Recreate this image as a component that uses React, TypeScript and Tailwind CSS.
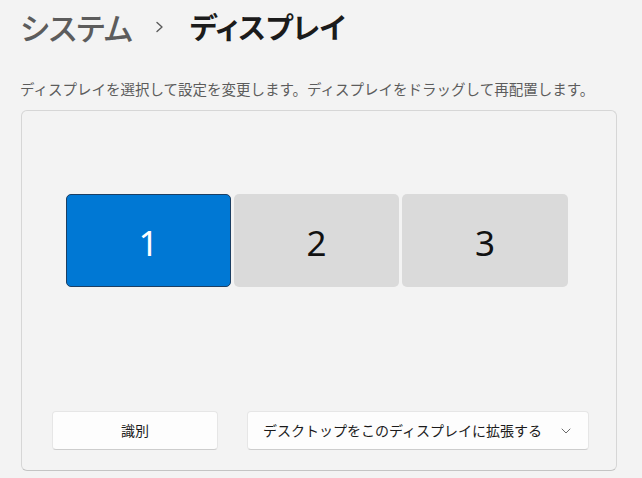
import React from "react";

const JP = { fontFamily: '"Noto Sans CJK JP", "Noto Sans", sans-serif' };

export default function App() {
  return (
    <div className="w-[642px] h-[478px] bg-[#f3f3f3] overflow-hidden" style={JP}>
      <div className="pl-[20px] pt-[5px]">
        <div className="flex items-center h-[42px] leading-none [font-feature-settings:'palt']">
          <span className="text-[31px] font-medium text-[#5c5c5c]">システム</span>
          <svg className="ml-[22px] mr-[26px] mt-[2px]" width="9" height="12" viewBox="0 0 9 12" fill="none">
            <path d="M2 1.5l5 4.5-5 4.5" stroke="#5a5a5a" strokeWidth="1.4" strokeLinecap="round" strokeLinejoin="round" />
          </svg>
          <span className="text-[29px] font-bold text-[#1b1b1b]">ディスプレイ</span>
        </div>
        <div className="mt-[32px] text-[14.5px] leading-[20px] text-[#5c5c5c]">
          ディスプレイを選択して設定を変更します。ディスプレイをドラッグして再配置します。
        </div>
        <div className="mt-[11px] ml-px w-[596px] h-[361px] rounded-[6px] border border-[#d6d6d6] border-b-[#c4c4c4] bg-[#f3f3f3] flex flex-col">
          <div className="flex justify-center gap-[3px] pt-[83px] pr-[4px]">
            <div className="w-[165px] h-[93px] rounded-[5px] bg-[#0078d4] border border-[#1c3f63] flex items-center justify-center text-white text-[35px] leading-none" style={{ fontFamily: '"Noto Sans", sans-serif' }}>
              <span className="mt-[4px]">1</span>
            </div>
            <div className="w-[165px] h-[93px] rounded-[5px] bg-[#dadada] flex items-center justify-center text-[#111] text-[35px] leading-none" style={{ fontFamily: '"Noto Sans", sans-serif' }}>
              <span className="mt-[4px]">2</span>
            </div>
            <div className="w-[166px] h-[93px] rounded-[5px] bg-[#dadada] flex items-center justify-center text-[#111] text-[35px] leading-none" style={{ fontFamily: '"Noto Sans", sans-serif' }}>
              <span className="mt-[4px]">3</span>
            </div>
          </div>
          <div className="mt-auto mb-[20px] flex gap-[29px] pl-[30px]">
            <div className="w-[166px] h-[39px] rounded-[4px] bg-[#fdfdfd] border border-[#e6e6e6] border-b-[#cdcdcd] flex items-center justify-center text-[14px] text-[#1b1b1b]">
              識別
            </div>
            <div className="w-[342px] h-[39px] rounded-[4px] bg-[#fdfdfd] border border-[#e6e6e6] border-b-[#cdcdcd] flex items-center pl-[15px] pr-[17px] text-[14px] text-[#1b1b1b]">
              <span className="flex-1">デスクトップをこのディスプレイに拡張する</span>
              <svg width="10" height="6" viewBox="0 0 10 6" fill="none">
                <path d="M1 1l4 4 4-4" stroke="#6a6a6a" strokeWidth="1" strokeLinecap="round" strokeLinejoin="round" />
              </svg>
            </div>
          </div>
        </div>
      </div>
    </div>
  );
}
